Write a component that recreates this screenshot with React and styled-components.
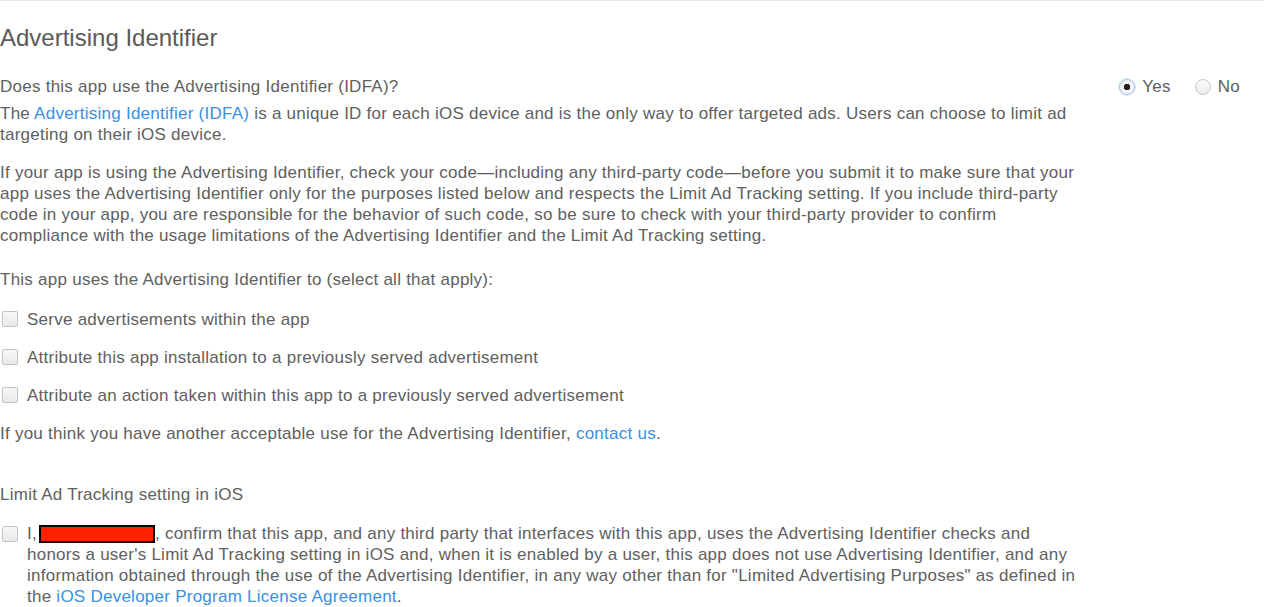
import React from "react";
import styled, { createGlobalStyle } from "styled-components";

const GlobalStyle = createGlobalStyle`
  body {
    margin: 0;
    background: #fff;
    font-family: "Liberation Sans", Arial, sans-serif;
    color: #606060;
  }
`;

const Page = styled.div`
  border-top: 1px solid #e6e6e6;
  width: 1264px;
  height: 606px;
  overflow: hidden;
  font-size: 17px;
  line-height: 21px;
  letter-spacing: 0.25px;
`;

const Title = styled.h1`
  margin: 22px 0 0;
  font-size: 24px;
  line-height: 30px;
  font-weight: normal;
  letter-spacing: 0;
  color: #5a5a5a;
`;

const QuestionRow = styled.div`
  display: flex;
  justify-content: space-between;
  align-items: center;
  width: 1240px;
  margin-top: 23px;
`;

const Radios = styled.div`
  display: flex;
  align-items: center;
  gap: 24px;
`;

const RadioLabel = styled.label`
  display: flex;
  align-items: center;
  gap: 7px;
`;

const RadioDot = styled.span`
  width: 14px;
  height: 14px;
  border-radius: 50%;
  border: 1px solid ${(p) => (p.checked ? "#aac4e4" : "#c8c8c8")};
  background: ${(p) =>
    p.checked
      ? "radial-gradient(circle, #222 0 3px, #f4f4f4 3.5px)"
      : "linear-gradient(#fafafa, #ececec)"};
  box-shadow: ${(p) => (p.checked ? "0 0 0 1px #dbe7f5" : "none")};
`;

const Para = styled.p`
  margin: ${(p) => p.mt || 0}px 0 0;
  width: 1088px;
`;

const Link = styled.a`
  color: #3a8fe4;
  text-decoration: none;
`;

const CheckList = styled.div`
  margin-top: 10px;
`;

const CheckRow = styled.label`
  display: flex;
  align-items: center;
  gap: 9px;
  height: 38px;
  padding-left: 2px;
`;

const Box = styled.span`
  flex: none;
  width: 14px;
  height: 14px;
  border: 1px solid #c4c4c4;
  border-radius: 2px;
  background: linear-gradient(#f7f7f7, #e9e9e9);
`;

const Agree = styled.div`
  display: flex;
  align-items: flex-start;
  gap: 9px;
  margin-top: 18px;
  padding-left: 2px;
  width: 1086px;
  ${Box} {
    margin-top: 3px;
  }
`;

const Redacted = styled.span`
  display: inline-block;
  width: 112px;
  height: 14px;
  margin-left: 2px;
  background: #ff2200;
  border: 2px solid #000;
  vertical-align: -4px;
`;

const options = [
  "Serve advertisements within the app",
  "Attribute this app installation to a previously served advertisement",
  "Attribute an action taken within this app to a previously served advertisement",
];

export default function App() {
  return (
    <Page>
      <GlobalStyle />
      <Title>Advertising Identifier</Title>
      <QuestionRow>
        <span>Does this app use the Advertising Identifier (IDFA)?</span>
        <Radios>
          <RadioLabel>
            <RadioDot checked />
            Yes
          </RadioLabel>
          <RadioLabel>
            <RadioDot />
            No
          </RadioLabel>
        </Radios>
      </QuestionRow>
      <Para mt={6}>
        The <Link>Advertising Identifier (IDFA)</Link> is a unique ID for each
        iOS device and is the only way to offer targeted ads. Users can choose
        to limit ad targeting on their iOS device.
      </Para>
      <Para mt={17}>
        If your app is using the Advertising Identifier, check your
        code—including any third-party code—before you submit it to make sure
        that your app uses the Advertising Identifier only for the purposes
        listed below and respects the Limit Ad Tracking setting. If you include
        third-party code in your app, you are responsible for the behavior of
        such code, so be sure to check with your third-party provider to
        confirm compliance with the usage limitations of the Advertising
        Identifier and the Limit Ad Tracking setting.
      </Para>
      <Para mt={23}>
        This app uses the Advertising Identifier to (select all that apply):
      </Para>
      <CheckList>
        {options.map((o) => (
          <CheckRow key={o}>
            <Box />
            {o}
          </CheckRow>
        ))}
      </CheckList>
      <Para mt={9}>
        If you think you have another acceptable use for the Advertising
        Identifier, <Link>contact us</Link>.
      </Para>
      <Para mt={40}>Limit Ad Tracking setting in iOS</Para>
      <Agree>
        <Box />
        <span>
          I,<Redacted />, confirm that this app, and any third party that
          interfaces with this app, uses the Advertising Identifier checks and
          honors a user's Limit Ad Tracking setting in iOS and, when it is
          enabled by a user, this app does not use Advertising Identifier, and
          any information obtained through the use of the Advertising
          Identifier, in any way other than for "Limited Advertising Purposes"
          as defined in the <Link>iOS Developer Program License Agreement</Link>.
        </span>
      </Agree>
    </Page>
  );
}
